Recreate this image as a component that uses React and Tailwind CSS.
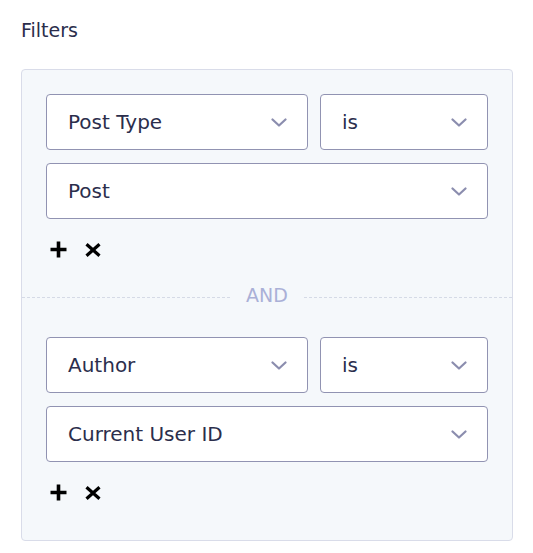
import React from "react";

const Chevron = () => (
  <svg width="16" height="9" viewBox="0 0 16 9" fill="none" className="shrink-0">
    <path d="M1.5 1.5L8 7.5L14.5 1.5" stroke="#8b8dae" strokeWidth="2.2" strokeLinecap="round" strokeLinejoin="round" />
  </svg>
);

const Select = ({ label, className }) => (
  <div
    className={
      "flex h-[56px] items-center justify-between rounded-[4px] border border-[#9193b2] bg-white pl-[21px] pr-[20px] " +
      className
    }
  >
    <span className="text-[20px] text-[#2b2e4c]">{label}</span>
    <Chevron />
  </div>
);

const Actions = () => (
  <div className="mt-[22px] flex h-[17px] items-center gap-[18px] pl-[4px]">
    <svg width="17" height="17" viewBox="0 0 17 17">
      <path d="M8.5 0.5v16M0.5 8.5h16" stroke="#000" strokeWidth="3.6" />
    </svg>
    <svg width="16" height="14" viewBox="0 0 16 14">
      <path d="M1.5 1.2L14.5 12.8M14.5 1.2L1.5 12.8" stroke="#000" strokeWidth="3.2" />
    </svg>
  </div>
);

const Group = ({ field, value }) => (
  <div className="flex flex-col">
    <div className="flex gap-[12px]">
      <Select label={field} className="w-[262px]" />
      <Select label="is" className="flex-1" />
    </div>
    <Select label={value} className="mt-[13px]" />
    <Actions />
  </div>
);

export default function App() {
  return (
    <div className="min-h-screen bg-white pl-[21px] pt-[18px] font-['DejaVu_Sans',sans-serif]">
      <div className="h-[24px] text-[19px] leading-[24px] text-[#2b2e4c]">Filters</div>
      <div className="mt-[27px] w-[492px] rounded-[4px] border border-[#d9dce9] bg-[#f5f8fb] p-[24px]">
        <Group field="Post Type" value="Post" />
        <div className="-mx-[24px] flex h-[79px] items-center">
          <div className="flex-1 border-t border-dashed border-[#d5dae6]" />
          <span className="px-[16px] pb-[5px] text-[19px] leading-[24px] text-[#aab0d7]">AND</span>
          <div className="flex-1 border-t border-dashed border-[#d5dae6]" />
        </div>
        <Group field="Author" value="Current User ID" />
        <div className="h-[15px]" />
      </div>
    </div>
  );
}
